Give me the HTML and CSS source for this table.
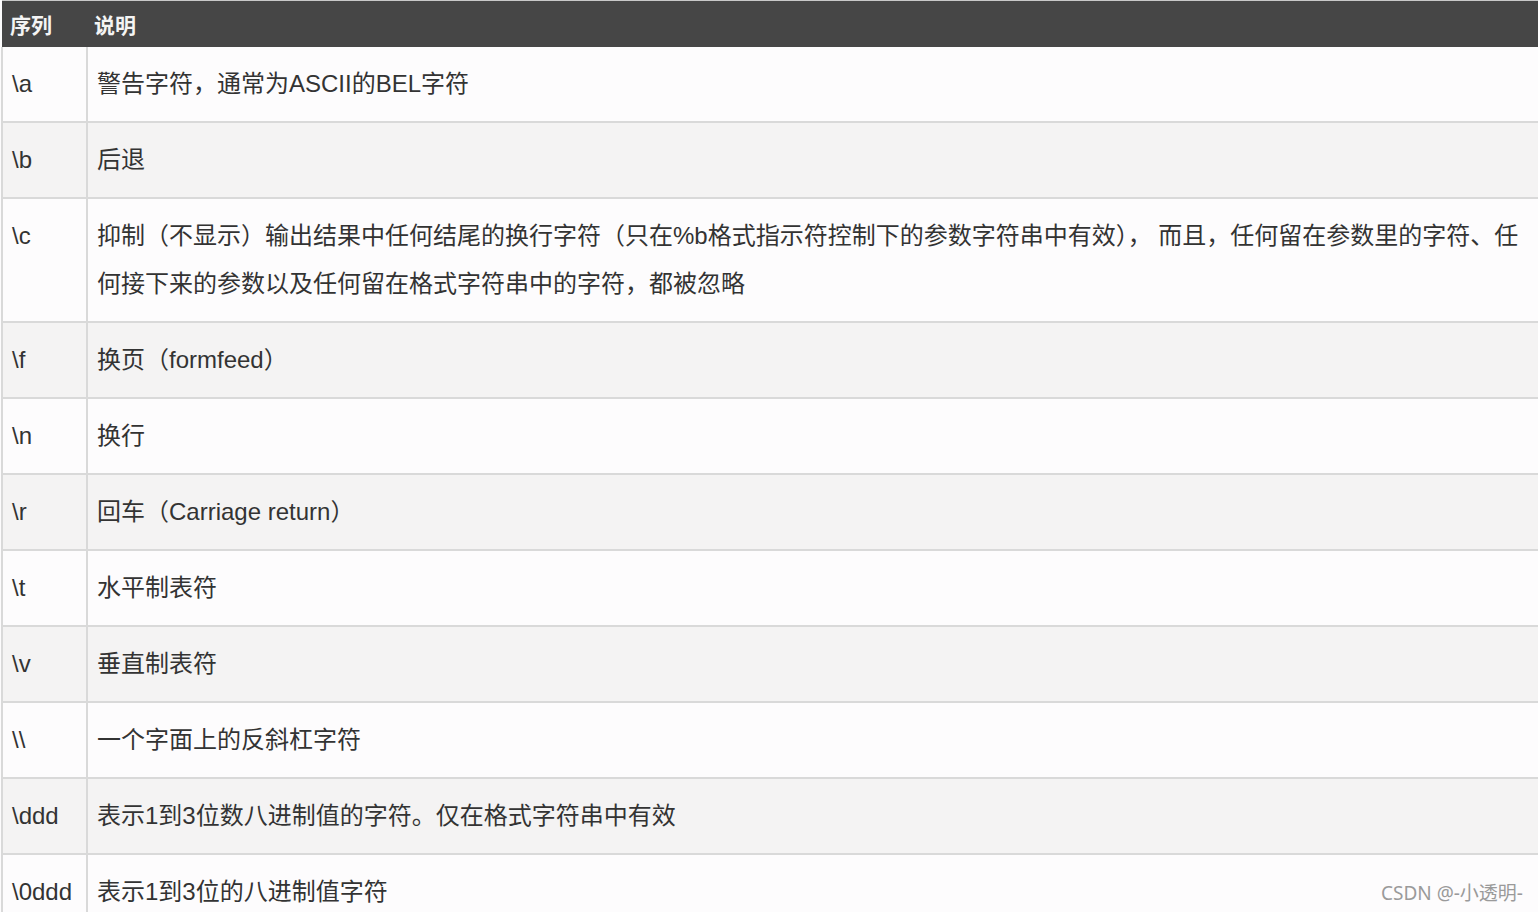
FILE: index.html
```html
<!DOCTYPE html>
<html lang="zh">
<head>
<meta charset="utf-8">
<link rel="stylesheet" href="styles.css">
</head>
<body>
<table class="esc">
  <thead>
    <tr><th class="c1">序列</th><th class="c2">说明</th></tr>
  </thead>
  <tbody>
    <tr><td class="c1">\a</td><td class="c2">警告字符，通常为ASCII的BEL字符</td></tr>
    <tr class="alt"><td class="c1">\b</td><td class="c2">后退</td></tr>
    <tr><td class="c1 top">\c</td><td class="c2">抑制（不显示）输出结果中任何结尾的换行字符（只在%b格式指示符控制下的参数字符串中有效）， 而且，任何留在参数里的字符、任何接下来的参数以及任何留在格式字符串中的字符，都被忽略</td></tr>
    <tr class="alt"><td class="c1">\f</td><td class="c2">换页（formfeed）</td></tr>
    <tr><td class="c1">\n</td><td class="c2">换行</td></tr>
    <tr class="alt"><td class="c1">\r</td><td class="c2">回车（Carriage return）</td></tr>
    <tr><td class="c1">\t</td><td class="c2">水平制表符</td></tr>
    <tr class="alt"><td class="c1">\v</td><td class="c2">垂直制表符</td></tr>
    <tr><td class="c1">\\</td><td class="c2">一个字面上的反斜杠字符</td></tr>
    <tr class="alt"><td class="c1">\ddd</td><td class="c2">表示1到3位数八进制值的字符。仅在格式字符串中有效</td></tr>
    <tr><td class="c1">\0ddd</td><td class="c2">表示1到3位的八进制值字符</td></tr>
  </tbody>
</table>
<div class="mark">CSDN @-小透明-</div>
</body>
</html>
```
FILE: styles.css
```css
html, body {
  margin: 0;
  padding: 0;
  background: #fdfcfd;
  overflow: hidden;
  height: 912px;
}
body {
  font-family: "Liberation Sans", "Noto Sans CJK SC", sans-serif;
  color: #333;
  position: relative;
}
.esc {
  border-collapse: collapse;
  width: 1540px;
  margin-left: 1px;
  border-top: 1px solid #c8c8c8;
}
.esc th {
  background: #464646;
  color: #f4f4f4;
  font-size: 21px;
  font-weight: bold;
  text-align: left;
  height: 46px;
  padding: 0 0 0 8px;
  box-sizing: border-box;
  border: none;
  vertical-align: middle;
}
.esc th.c2 {
  padding-left: 7px;
}
.esc td {
  border: 2px solid #d9d9d9;
  font-size: 24px;
  line-height: 48px;
  padding: 13px 10px 13px 9px;
  vertical-align: middle;
  text-align: left;
}
.esc td.c1 {
  width: 85px;
  box-sizing: border-box;
  padding-left: 9px;
  padding-right: 0;
  white-space: nowrap;
}
.esc td.top {
  vertical-align: top;
}
.esc tr.alt td {
  background: #f4f3f3;
}
.esc tbody tr:first-child td {
  border-top: none;
}
.mark {
  position: absolute;
  right: 15px;
  bottom: 6px;
  font-family: "Noto Sans", "Noto Sans CJK SC", sans-serif;
  font-size: 19px;
  color: #9a9a9a;
}
```
